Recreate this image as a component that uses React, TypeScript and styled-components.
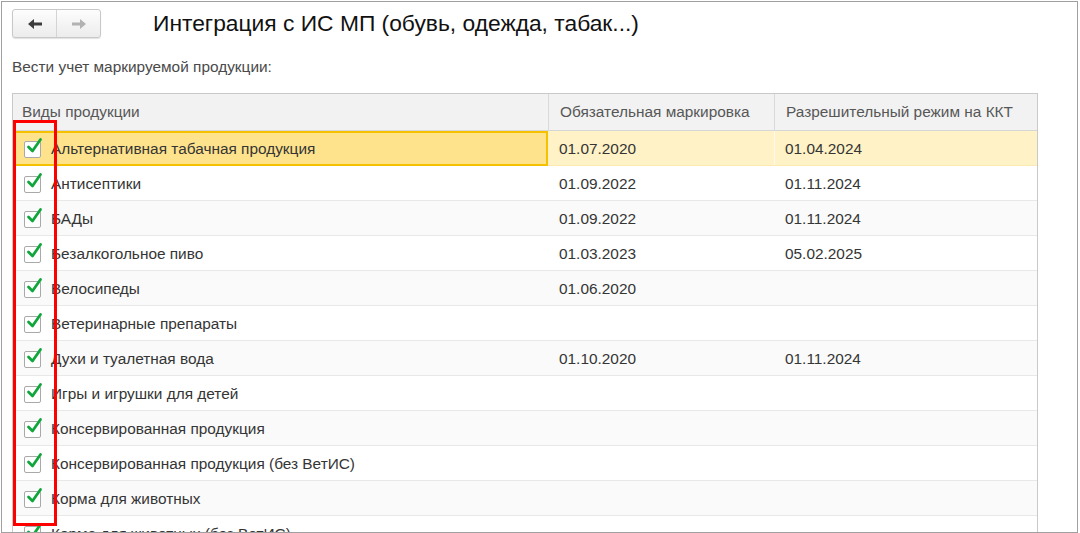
import React from 'react'
import styled, { createGlobalStyle } from 'styled-components'

const GlobalStyle = createGlobalStyle`
  html, body { margin: 0; padding: 0; background: #fff; }
  body { font-family: "Liberation Sans", Arial, sans-serif; }
`

const Frame = styled.div`
  box-sizing: border-box;
  width: 1077px;
  height: 532px;
  margin: 1px 0 0 1px;
  border: 1px solid #a0a0a0;
  padding: 7px 0 0 10px;
  overflow: hidden;
  display: flex;
  flex-direction: column;
`

const Toolbar = styled.div`
  display: flex;
  align-items: center;
  height: 29px;
`

const NavGroup = styled.div`
  display: flex;
  box-sizing: border-box;
  width: 89px;
  height: 29px;
  border: 1px solid #c8c8c8;
  border-radius: 3px;
  background: linear-gradient(#fdfdfd, #ececec);
  box-shadow: 0 1px 1px rgba(0,0,0,0.12);
`

const NavButton = styled.div<{ $divider?: boolean }>`
  flex: 1;
  display: flex;
  align-items: center;
  justify-content: center;
  border-left: ${p => (p.$divider ? '1px solid #d4d4d4' : 'none')};
`

const Title = styled.h1`
  margin: 0 0 0 52px;
  font-size: 22.8px;
  font-weight: normal;
  color: #111;
  line-height: 29px;
`

const Caption = styled.div`
  margin-top: 20px;
  font-size: 15.4px;
  color: #4a4a4a;
  line-height: 17px;
`

const TableWrap = styled.div`
  position: relative;
  margin-top: 18px;
  width: 1026px;
  box-sizing: border-box;
  border: 1px solid #c9c9c9;
  border-bottom: none;
`

const Grid = styled.div`
  display: grid;
  grid-template-columns: 535px 226px 1fr;
`

const HeadCell = styled.div<{ $first?: boolean }>`
  height: 37px;
  box-sizing: border-box;
  background: #f2f2f2;
  border-bottom: 1px solid #d6d6d6;
  border-left: ${p => (p.$first ? 'none' : '1px solid #d9d9d9')};
  padding: 0 0 0 ${p => (p.$first ? '9px' : '11px')};
  display: flex;
  align-items: center;
  font-size: 15.4px;
  color: #575757;
`

const Cell = styled.div<{ $bg: string; $focused?: boolean; $line: string; $split?: boolean }>`
  height: 35px;
  box-sizing: border-box;
  background: ${p => (p.$focused ? '#ffe38c' : p.$bg)};
  border-bottom: 1px solid ${p => p.$line};
  box-shadow: ${p => (p.$split ? 'inset 1px 0 0 #fffaf0' : 'none')};
  outline: ${p => (p.$focused ? '2px solid #f6c200' : 'none')};
  outline-offset: -2px;
  display: flex;
  align-items: center;
  gap: 10px;
  padding-left: 11px;
  padding-top: 2px;
  font-size: 15.4px;
  color: #353535;
  white-space: nowrap;
`

const Box = styled.span`
  position: relative;
  flex: none;
  width: 17px;
  height: 17px;
  box-sizing: border-box;
  border: 1px solid #a9a9a9;
  border-radius: 2px;
  background: #fff;
`

const Check = styled.svg`
  position: absolute;
  left: 1px;
  top: -5px;
`

const Marker = styled.div`
  position: absolute;
  left: 0;
  top: 26px;
  width: 44px;
  height: 406px;
  box-sizing: border-box;
  border: 3px solid #ff0000;
  pointer-events: none;
`

const rows: [string, string, string][] = [
  ['Альтернативная табачная продукция', '01.07.2020', '01.04.2024'],
  ['Антисептики', '01.09.2022', '01.11.2024'],
  ['БАДы', '01.09.2022', '01.11.2024'],
  ['Безалкогольное пиво', '01.03.2023', '05.02.2025'],
  ['Велосипеды', '01.06.2020', ''],
  ['Ветеринарные препараты', '', ''],
  ['Духи и туалетная вода', '01.10.2020', '01.11.2024'],
  ['Игры и игрушки для детей', '', ''],
  ['Консервированная продукция', '', ''],
  ['Консервированная продукция (без ВетИС)', '', ''],
  ['Корма для животных', '', ''],
  ['Корма для животных (без ВетИС)', '', ''],
]

const Arrow = ({ dir, color }: { dir: 'l' | 'r'; color: string }) => (
  <svg width="16" height="12" viewBox="0 0 16 12">
    <g transform={dir === 'r' ? 'translate(16 0) scale(-1 1)' : undefined}>
      <path d="M1 6 L7 1 L7 4.5 L15 4.5 L15 7.5 L7 7.5 L7 11 Z" fill={color} />
    </g>
  </svg>
)

const CheckBox = () => (
  <Box>
    <Check width="17" height="18" viewBox="0 0 17 18">
      <path d="M2.5 10 L6.5 14 L14.5 2.5" fill="none" stroke="#11a63c" strokeWidth="2.8" strokeLinecap="round" strokeLinejoin="round" />
    </Check>
  </Box>
)

export default function App() {
  return (
    <>
      <GlobalStyle />
      <Frame>
        <Toolbar>
          <NavGroup>
            <NavButton><Arrow dir="l" color="#3c3c3c" /></NavButton>
            <NavButton $divider><Arrow dir="r" color="#b2b2b2" /></NavButton>
          </NavGroup>
          <Title>Интеграция с ИС МП (обувь, одежда, табак...)</Title>
        </Toolbar>
        <Caption>Вести учет маркируемой продукции:</Caption>
        <TableWrap>
          <Grid>
            <HeadCell $first>Виды продукции</HeadCell>
            <HeadCell>Обязательная маркировка</HeadCell>
            <HeadCell>Разрешительный режим на ККТ</HeadCell>
            {rows.map((r, i) => {
              const bg = i === 0 ? '#fff2c6' : i % 2 === 1 ? '#ffffff' : '#fafafa'
              const line = i === 0 ? '#fbe9b0' : '#e8e8e8'
              return (
                <React.Fragment key={r[0]}>
                  <Cell $bg={bg} $line={line} $focused={i === 0}>
                    <CheckBox />
                    {r[0]}
                  </Cell>
                  <Cell $bg={bg} $line={line}>{r[1]}</Cell>
                  <Cell $bg={bg} $line={line} $split={i === 0}>{r[2]}</Cell>
                </React.Fragment>
              )
            })}
          </Grid>
          <Marker />
        </TableWrap>
      </Frame>
    </>
  )
}
